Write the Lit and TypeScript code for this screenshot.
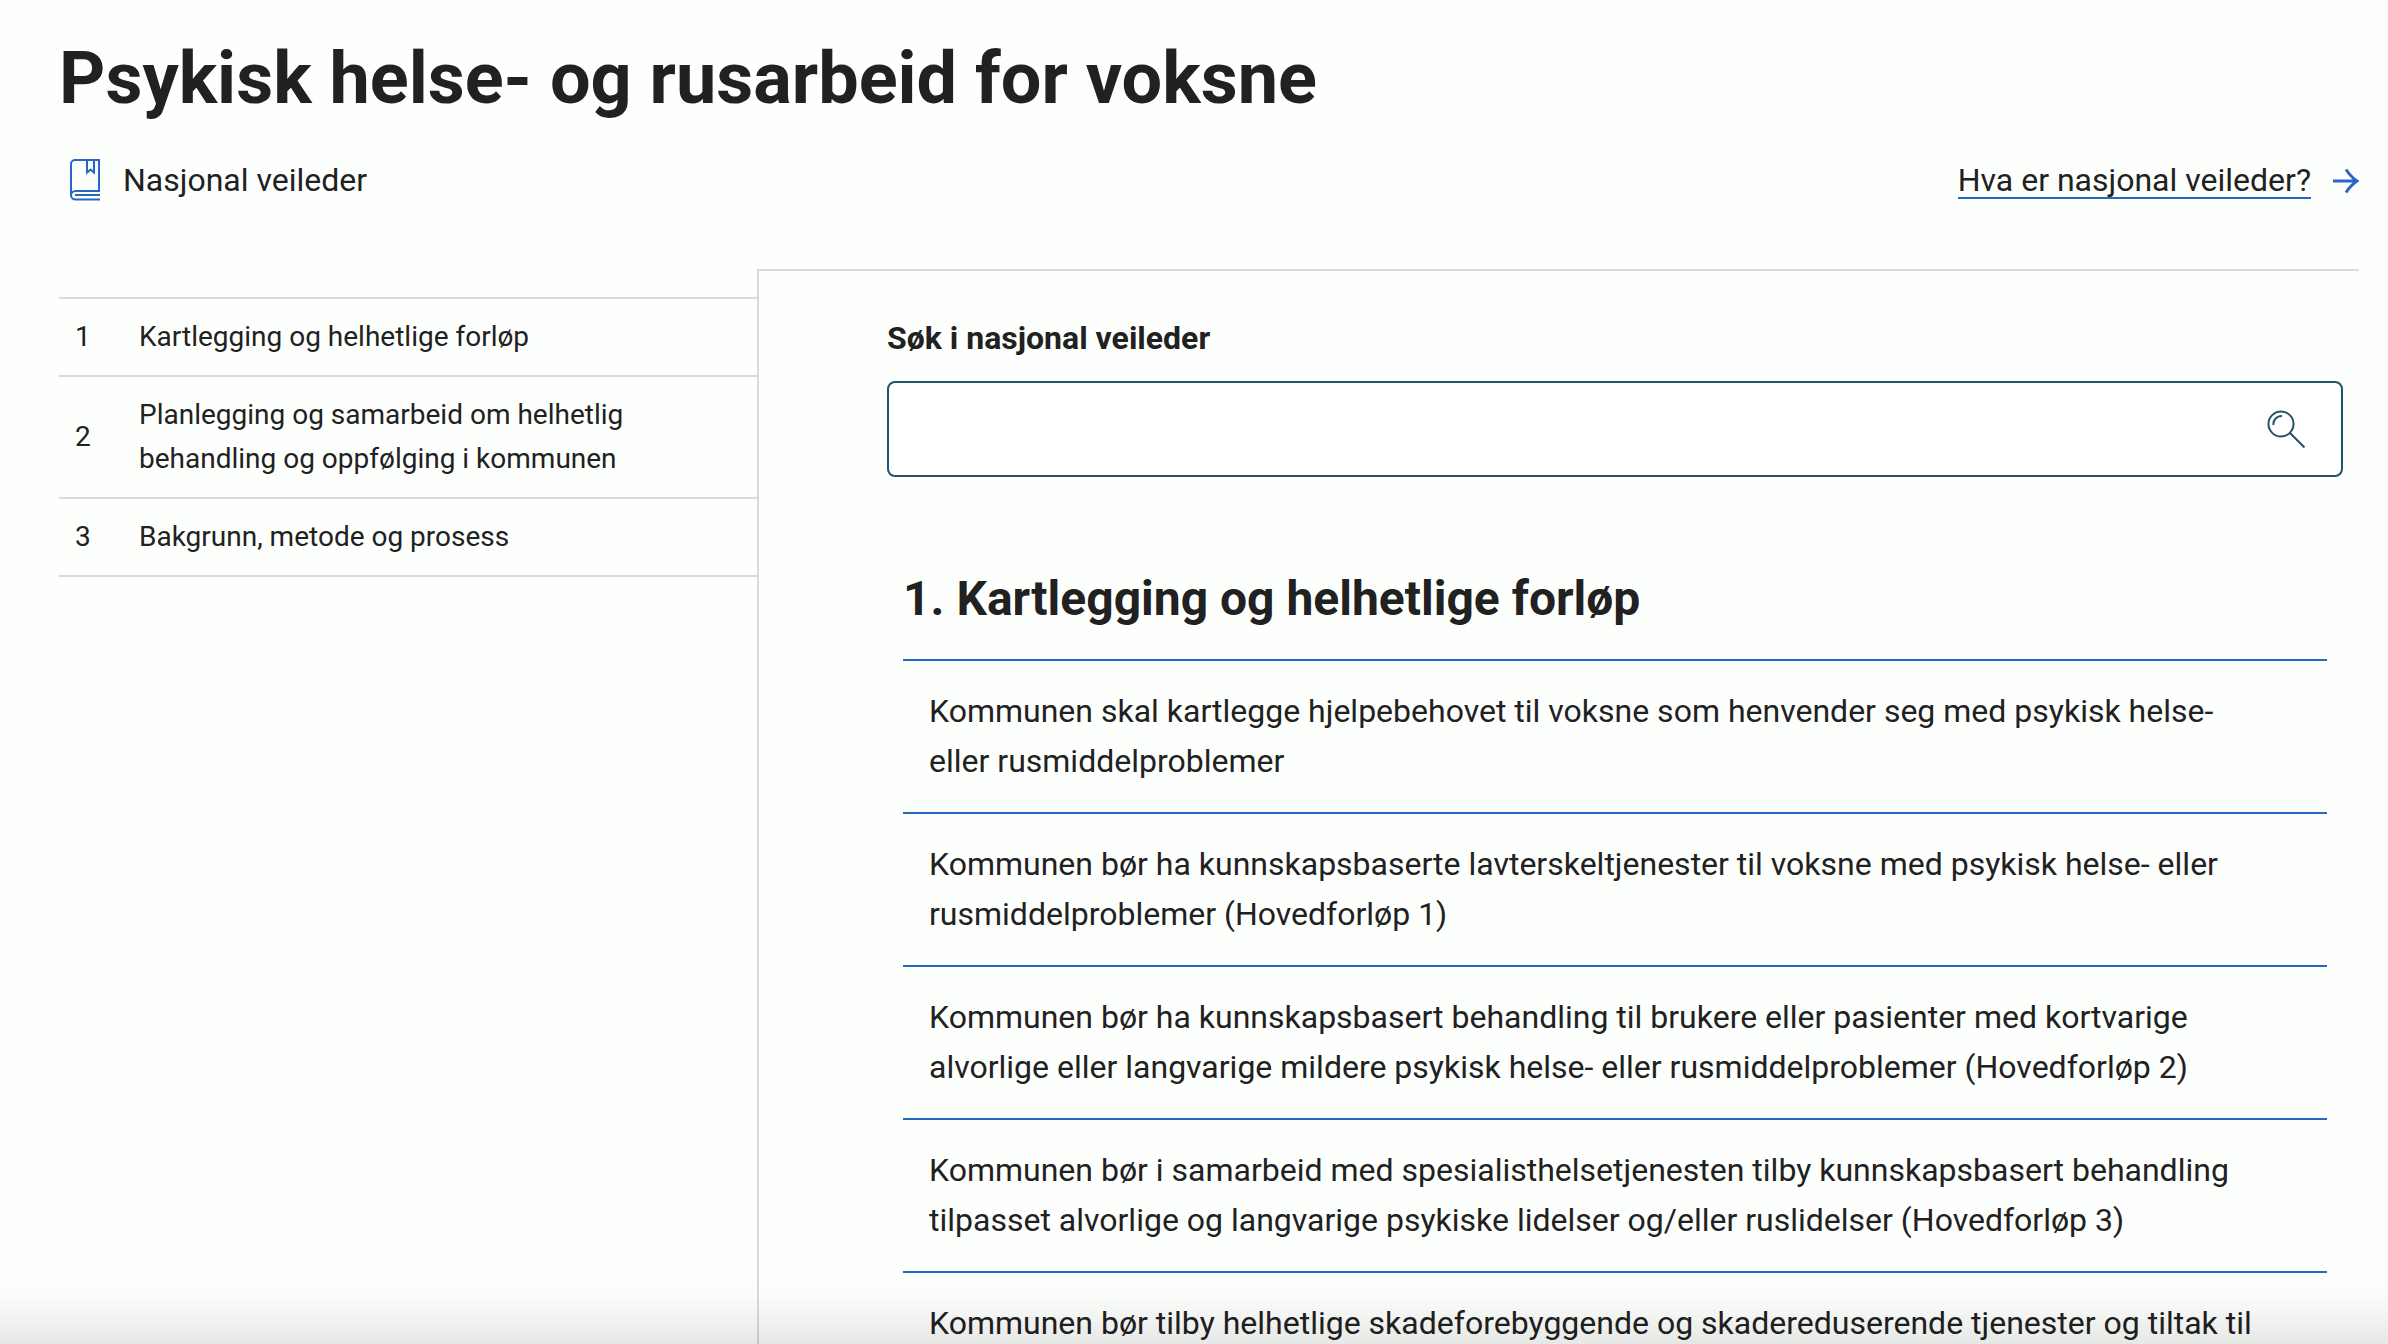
import { LitElement, html, css, svg } from "lit";
import { customElement } from "lit/decorators.js";

const chapters = [
  "Kartlegging og helhetlige forløp",
  "Planlegging og samarbeid om helhetlig behandling og oppfølging i kommunen",
  "Bakgrunn, metode og prosess",
];

const recommendations = [
  "Kommunen skal kartlegge hjelpebehovet til voksne som henvender seg med psykisk helse- eller rusmiddelproblemer",
  "Kommunen bør ha kunnskapsbaserte lavterskeltjenester til voksne med psykisk helse- eller rusmiddelproblemer (Hovedforløp 1)",
  "Kommunen bør ha kunnskapsbasert behandling til brukere eller pasienter med kortvarige alvorlige eller langvarige mildere psykisk helse- eller rusmiddelproblemer (Hovedforløp 2)",
  "Kommunen bør i samarbeid med spesialisthelsetjenesten tilby kunnskapsbasert behandling tilpasset alvorlige og langvarige psykiske lidelser og/eller ruslidelser (Hovedforløp 3)",
  "Kommunen bør tilby helhetlige skadeforebyggende og skadereduserende tjenester og tiltak til",
];

const bookIcon = html`<svg class="book" viewBox="0 0 30 42" aria-hidden="true">
  ${svg`<path d="M29 32V1H5a4 4 0 0 0-4 4v31a4.500 4.500 0 0 0 4.500 4.500H30M30 32H5.500a4.500 4.500 0 0 0-4.500 4.500M5 36H30M17 1v12.500l3.500-3 3.500 3V1"/>`}
</svg>`;

const arrowIcon = html`<svg class="arrow" viewBox="0 0 26 26" aria-hidden="true">
  ${svg`<path d="M0 13H24M13 1.500Q18 9 24 13Q18 17 13 24.500"/>`}
</svg>`;

const searchIcon = html`<svg class="lens" viewBox="0 0 40 40" aria-hidden="true">
  ${svg`<circle cx="14" cy="15" r="12.500"/><path d="M6.500 16a8 8 0 0 1 8.500-9M23 24L37.500 38.500"/>`}
</svg>`;

@customElement("app-root")
export class AppRoot extends LitElement {
  static styles = css`
    :host {
      display: block;
      height: 100vh;
      overflow-y: auto;
      scrollbar-width: none;
      background: #fdfffd;
      color: #212121;
      font-family: Roboto, "Liberation Sans", sans-serif;
      font-size: 32px;
      line-height: 50px;
    }
    * {
      box-sizing: border-box;
    }
    a {
      color: inherit;
      text-decoration: none;
    }
    svg {
      display: block;
      flex: none;
      fill: none;
    }
    ol {
      list-style: none;
      margin: 0;
      padding: 0;
    }
    .page {
      display: flex;
      flex-direction: column;
      min-height: 100%;
      padding: 35px 29px 0 59px;
    }
    .title {
      margin: 0;
      font-size: 72px;
      line-height: 88px;
      font-weight: 700;
    }
    .meta {
      display: flex;
      justify-content: space-between;
      align-items: center;
      margin: 32px 0 64px;
    }
    .kind {
      display: flex;
      align-items: center;
      gap: 23px;
      padding-left: 11px;
    }
    .book {
      width: 30px;
      height: 42px;
      stroke: #2965c4;
      stroke-width: 2;
    }
    .about {
      display: flex;
      align-items: center;
      gap: 22px;
      padding-top: 2px;
    }
    .about-text {
      line-height: 34px;
      border-bottom: 2px solid #2965c4;
    }
    .arrow {
      width: 26px;
      height: 26px;
      stroke: #2965c4;
      stroke-width: 3;
    }
    .columns {
      flex: 1;
      display: flex;
    }
    .chapters {
      flex: none;
      width: 698px;
      padding-top: 28px;
      font-size: 28px;
      line-height: 44px;
    }
    .chapter {
      border-bottom: 2px solid #d9dad9;
    }
    .chapter:first-child {
      border-top: 2px solid #d9dad9;
    }
    .chapter-link {
      display: grid;
      grid-template-columns: 64px 1fr;
      align-items: center;
      padding: 16px 96px 16px 16px;
    }
    .content {
      flex: 1;
      min-width: 0;
      border: solid #d9dad9;
      border-width: 2px 0 0 2px;
      padding: 42px 16px 0 128px;
    }
    .search {
      display: flex;
      flex-direction: column;
      gap: 18px;
    }
    .search-label {
      font-weight: 700;
    }
    .search-box {
      display: flex;
      height: 96px;
      border: 2px solid #25536b;
      border-radius: 8px;
      background: #fff;
    }
    .search-input {
      flex: 1;
      min-width: 0;
      border: 0;
      padding: 0 24px;
      background: none;
      font: inherit;
      color: inherit;
      outline: none;
    }
    .search-button {
      display: flex;
      align-items: center;
      border: 0;
      padding: 0 34px;
      background: none;
    }
    .lens {
      width: 40px;
      height: 40px;
      stroke: #25536b;
      stroke-width: 2;
    }
    .section {
      padding: 92px 16px 0;
    }
    .heading {
      margin: 0 0 30px;
      font-size: 48px;
      line-height: 60px;
      font-weight: 700;
    }
    .item-link {
      display: block;
      border-top: 2px solid #2965c4;
      padding: 25px 64px 26px 26px;
    }
    .shade {
      position: fixed;
      inset: auto 0 0 0;
      height: 72px;
      pointer-events: none;
      background: linear-gradient(
        rgba(0, 0, 0, 0),
        rgba(0, 0, 0, 0.01) 35%,
        rgba(0, 0, 0, 0.05) 70%,
        rgba(0, 0, 0, 0.09)
      );
    }
  `;

  render() {
    return html`
      <div class="page">
        <header>
          <h1 class="title">Psykisk helse- og rusarbeid for voksne</h1>
          <div class="meta">
            <div class="kind">${bookIcon}<span>Nasjonal veileder</span></div>
            <a class="about" href="#om">
              <span class="about-text">Hva er nasjonal veileder?</span>${arrowIcon}
            </a>
          </div>
        </header>
        <div class="columns">
          <nav class="chapters">
            <ol>
              ${chapters.map(
                (name, i) => html`<li class="chapter">
                  <a class="chapter-link" href="#kapittel-${i + 1}">
                    <span>${i + 1}</span><span>${name}</span>
                  </a>
                </li>`,
              )}
            </ol>
          </nav>
          <main class="content">
            <form class="search" role="search" @submit=${(e: Event) => e.preventDefault()}>
              <label class="search-label" id="query-label" for="query">Søk i nasjonal veileder</label>
              <div class="search-box">
                <input class="search-input" id="query" type="text" />
                <button class="search-button" type="submit" aria-labelledby="query-label">
                  ${searchIcon}
                </button>
              </div>
            </form>
            <section class="section" id="kapittel-1">
              <h2 class="heading">1. ${chapters[0]}</h2>
              <ol>
                ${recommendations.map(
                  (text, i) => html`<li>
                    <a class="item-link" href="#anbefaling-${i + 1}">${text}</a>
                  </li>`,
                )}
              </ol>
            </section>
          </main>
        </div>
      </div>
      <div class="shade"></div>
    `;
  }
}
